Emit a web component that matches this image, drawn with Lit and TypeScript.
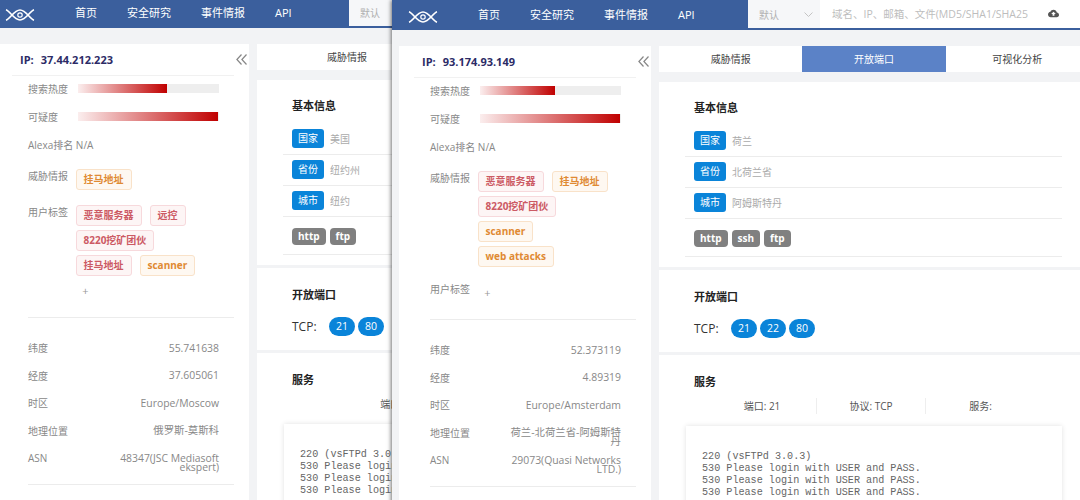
import { LitElement, html, css, nothing } from "lit";
import { customElement, property } from "lit/decorators.js";

type Tag = { t: string; c: "r" | "o" };
type Host = {
  ip: string; heat: number; sus: number; threat: Tag[]; user: Tag[];
  lat: string; lng: string; tz: string; geo: string; asn: string;
  country: string; province: string; city: string; protos: string[]; ports: string[];
  showTabs: boolean;
};

const LOG = ["220 (vsFTPd 3.0.3)", "530 Please login with USER and PASS.", "530 Please login with USER and PASS.", "530 Please login with USER and PASS."].join("\n");

@customElement("ip-window")
class IpWindow extends LitElement {
  @property({ attribute: false }) host_!: Host;
  @property({ type: Boolean, reflect: true }) back = false;

  static styles = css`
    :host { display: block; position: absolute; height: 510px; overflow: hidden; background: #f2f3f5;
      font-family: "Open Sans", "Noto Sans CJK SC", sans-serif; font-size: 10px; color: #888; }
    :host([back]) { left: -10px; top: -2px; width: 810px; }
    :host(:not([back])) { left: 392px; top: 0; width: 700px; box-shadow: -1px 0 4px rgba(0,0,0,.55); }

    .head { display: grid; grid-template-columns: 86px 270px 1fr; height: 30px; background: #3b5f9d; }
    :host([back]) .head { grid-template-columns: 85px 274px 1fr; }
    .logo { width: 30px; height: 12px; margin: 11px 0 0 16px; }
    :host([back]) .logo { margin-left: 15px; }
    .nav { display: flex; gap: 30px; align-items: center; height: 28px; color: #fff; font-size: 11px; }
    .search { display: flex; height: 28px; background: #fff; color: #b0b0b0; font-size: 10px; }
    .select { width: 72px; background: #f6f7f9; display: flex; align-items: center; justify-content: space-between;
      padding: 0 7px 0 11px; box-sizing: border-box; flex: none; }
    .ph { width: 196px; margin-left: 12px; white-space: nowrap; overflow: hidden; line-height: 28px; flex: none; color: #bdbdbd; font-size: 10.5px; }
    .cloud { width: 11px; height: 11px; margin: 8px 0 0 20px; fill: #555; flex: none; }

    .body { display: flex; gap: 8px; padding: 16px 0 0 7px; align-items: flex-start; }
    .side { width: 252px; flex: none; background: #fff; height: 460px; }
    .iphead { display: flex; align-items: center; justify-content: space-between; height: 31px; padding: 0 2px 0 23px; }
    .ip { color: #2c2b66; font-weight: 700; font-size: 11px; display: flex; gap: 7px; }
    .hr1 { height: 1px; background: #f1f1f1; margin: 0 15px; }
    .stat { display: flex; align-items: center; height: 24px; margin: 0 30px 4px 31px; }
    .stat .lbl { width: 50px; flex: none; white-space: nowrap; }
    .bar { flex: 1; height: 9px; background: #eee; }
    .fill { height: 100%; background: linear-gradient(90deg, #fbeeee, #c00000); }
    .tagrow { display: flex; margin: 0 0 15px 31px; }
    .tagrow.first { margin-top: 13px; }
    .tagrow .lbl { width: 47.5px; flex: none; line-height: 14px; white-space: nowrap; }
    .tags { display: flex; flex-wrap: wrap; gap: 4px 8px; width: 130px; }
    .tag { height: 21px; line-height: 19px; padding: 0 7px; box-sizing: border-box; border: 1px solid; border-radius: 3px;
      font-weight: 700; white-space: nowrap; }
    .tag.r { color: #cc5a64; background: #fdf5f5; border-color: #f7d9dc; }
    .tag.o { color: #e08a33; background: #fef8f1; border-color: #f9e2c9; }
    .plus { width: 20px; height: 22px; line-height: 22px; text-align: center; font-size: 11px; color: #999; }
    .hr2 { height: 1px; background: #ececec; margin: 0 15px 0 31px; }
    .geo { padding: 23px 30px 5px 31px; }
    .geo .row { display: flex; justify-content: space-between; height: 27.5px; }
    .geo .lbl { line-height: 14px; white-space: nowrap; }
    .geo .val { max-width: 115px; text-align: right; line-height: 9px; margin-top: 2.5px; font-size: 10.4px; }

    .main { flex: none; width: 430px; }
    :host([back]) .main { width: 540px; }
    .tabs { display: flex; height: 26px; background: #fff; margin-bottom: 10px; }
    .tabs div { flex: 1; text-align: center; line-height: 26px; color: #444; }
    .tabs .on { background: #5b82c7; color: #fff; }
    .card { background: #fff; padding: 17px 27px 0 26px; margin-bottom: 3px; box-sizing: border-box; }
    .card.info { height: 185px; padding-top: 16px; }
    .card.open { height: 82px; }
    .card.svc { height: 160px; }
    h3 { margin: 0 0 0 9px; font-size: 11px; font-weight: 700; color: #222; line-height: 20px; }
    .kv { display: flex; align-items: center; padding: 5px 0 6px 9px; border-bottom: 1px solid #ececec; color: #aaa; gap: 6px; }
    .kv.firstkv { margin-top: 8px; }
    .kv b { width: 32px; height: 19px; line-height: 19px; background: #0a84d9; color: #fff; font-weight: 400; border-radius: 3px; text-align: center; }
    .protos { display: flex; gap: 4px; padding: 11px 0 9px 9px; border-bottom: 1px solid #ececec; }
    .protos span { height: 17px; line-height: 17px; padding: 0 6px; background: #808080; color: #fff; border-radius: 4px; font-weight: 700; }
    .tcp { display: flex; align-items: center; gap: 3px; margin: 12px 0 0 9px; height: 19px; color: #333; font-size: 12px; }
    .tcpl { width: 34px; }
    .tcp span { width: 26px; height: 19px; line-height: 19px; border-radius: 10px; background: #0a84d9; color: #fff; font-size: 10.5px; text-align: center; }
    .cols { display: grid; grid-template-columns: repeat(3, 109px); margin: 6px 0 0; padding-left: 23px; height: 16px; color: #555; }
    :host([back]) .cols { grid-template-columns: repeat(3, 144px); padding-left: 44px; }
    .cols div { text-align: center; line-height: 16px; border-right: 1px solid #eee; }
    .cols div:last-child { border: 0; }
    pre { margin: 12px 0 0 1px; padding: 25px 16px 20px; font: 10.15px/12px "Liberation Mono", monospace; color: #666;
      box-shadow: 0 0 5px rgba(0,0,0,.12); background: #fff; height: 90px; box-sizing: content-box; }
  `;

  private tagEl(x: Tag) {
    return html`<span class="tag ${x.c}">${x.t}</span>`;
  }

  render() {
    const d = this.host_;
    return html`
      <div class="head">
        <svg class="logo" viewBox="0 0 30 12" fill="none" stroke="#fff" stroke-width="1.6">
          <path d="M1 .8C5 2 9 11 15 11C21 11 25 2 29 .8" />
          <path d="M1 11.2C5 10 9 1 15 1C21 1 25 10 29 11.2" />
          <circle cx="15" cy="6" r="2.2" stroke-width="1.2" />
        </svg>
        <div class="nav"><span>首页</span><span>安全研究</span><span>事件情报</span><span>API</span></div>
        <div class="search">
          <div class="select"><span>默认</span>
            <svg width="9" height="5" viewBox="0 0 9 5" fill="none" stroke="#c4c4c4"><path d="M.5.5 4.5 4.5 8.5.5" /></svg>
          </div>
          <div class="ph">域名、IP、邮箱、文件(MD5/SHA1/SHA256)</div>
          <svg class="cloud" viewBox="0 0 24 24"><path d="M19.35 10.04C18.67 6.59 15.64 4 12 4 9.11 4 6.6 5.64 5.35 8.04 2.34 8.36 0 10.91 0 14c0 3.31 2.69 6 6 6h13c2.76 0 5-2.24 5-5 0-2.64-2.05-4.78-4.65-4.96zM14 13v4h-4v-4H7l5-5 5 5h-3z" /></svg>
        </div>
      </div>
      <div class="body">
        <div class="side">
          <div class="iphead">
            <div class="ip"><span>IP:</span><span>${d.ip}</span></div>
            <svg width="11" height="11" viewBox="0 0 11 11" fill="none" stroke="#888" stroke-width="1.2"><path d="M5.5.5 .9 5.5 5.5 10.5M10.5.5 5.9 5.5 10.5 10.5" /></svg>
          </div>
          <div class="hr1"></div>
          <div class="stat"><span class="lbl">搜索热度</span><div class="bar"><div class="fill" style="width:${d.heat}%"></div></div></div>
          <div class="stat"><span class="lbl">可疑度</span><div class="bar"><div class="fill" style="width:${d.sus}%"></div></div></div>
          <div class="stat"><span class="lbl">Alexa排名 N/A</span></div>
          <div class="tagrow first"><span class="lbl">威胁情报</span><div class="tags">${d.threat.map((x) => this.tagEl(x))}</div></div>
          <div class="tagrow"><span class="lbl">用户标签</span><div class="tags">${d.user.map((x) => this.tagEl(x))}<span class="plus">+</span></div></div>
          <div class="hr2"></div>
          <div class="geo">
            <div class="row"><span class="lbl">纬度</span><span class="val">${d.lat}</span></div>
            <div class="row"><span class="lbl">经度</span><span class="val">${d.lng}</span></div>
            <div class="row"><span class="lbl">时区</span><span class="val">${d.tz}</span></div>
            <div class="row"><span class="lbl">地理位置</span><span class="val">${d.geo}</span></div>
            <div class="row"><span class="lbl">ASN</span><span class="val">${d.asn}</span></div>
          </div>
          <div class="hr2"></div>
        </div>
        <div class="main">
          <div class="tabs">
            <div>威胁情报</div>
            <div class="${d.showTabs ? "on" : ""}">${d.showTabs ? "开放端口" : nothing}</div>
            <div>${d.showTabs ? "可视化分析" : nothing}</div>
          </div>
          <div class="card info">
            <h3>基本信息</h3>
            <div class="kv firstkv"><b>国家</b>${d.country}</div>
            <div class="kv"><b>省份</b>${d.province}</div>
            <div class="kv"><b>城市</b>${d.city}</div>
            <div class="protos">${d.protos.map((p) => html`<span>${p}</span>`)}</div>
          </div>
          <div class="card open">
            <h3>开放端口</h3>
            <div class="tcp"><div class="tcpl">TCP:</div>${d.ports.map((p) => html`<span>${p}</span>`)}</div>
          </div>
          <div class="card svc">
            <h3>服务</h3>
            <div class="cols"><div>端口: 21</div><div>协议: TCP</div><div>服务:</div></div>
            <pre>${LOG}</pre>
          </div>
        </div>
      </div>
    `;
  }
}

const RU: Host = {
  ip: "37.44.212.223", heat: 63, sus: 99,
  threat: [{ t: "挂马地址", c: "o" }],
  user: [{ t: "恶意服务器", c: "r" }, { t: "远控", c: "r" }, { t: "8220挖矿团伙", c: "r" }, { t: "挂马地址", c: "r" }, { t: "scanner", c: "o" }],
  lat: "55.741638", lng: "37.605061", tz: "Europe/Moscow", geo: "俄罗斯-莫斯科", asn: "48347(JSC Mediasoft ekspert)",
  country: "美国", province: "纽约州", city: "纽约", protos: ["http", "ftp"], ports: ["21", "80"], showTabs: false,
};
const NL: Host = {
  ip: "93.174.93.149", heat: 53, sus: 99,
  threat: [{ t: "恶意服务器", c: "r" }, { t: "挂马地址", c: "o" }, { t: "8220挖矿团伙", c: "r" }, { t: "scanner", c: "o" }, { t: "web attacks", c: "o" }],
  user: [],
  lat: "52.373119", lng: "4.89319", tz: "Europe/Amsterdam", geo: "荷兰-北荷兰省-阿姆斯特丹", asn: "29073(Quasi Networks LTD.)",
  country: "荷兰", province: "北荷兰省", city: "阿姆斯特丹", protos: ["http", "ssh", "ftp"], ports: ["21", "22", "80"], showTabs: true,
};

@customElement("app-root")
export class AppRoot extends LitElement {
  static styles = css`
    :host { display: block; position: relative; width: 1080px; height: 500px; overflow: hidden; background: #f2f3f5; }
  `;
  render() {
    return html`<ip-window back .host_=${RU}></ip-window><ip-window .host_=${NL}></ip-window>`;
  }
}
